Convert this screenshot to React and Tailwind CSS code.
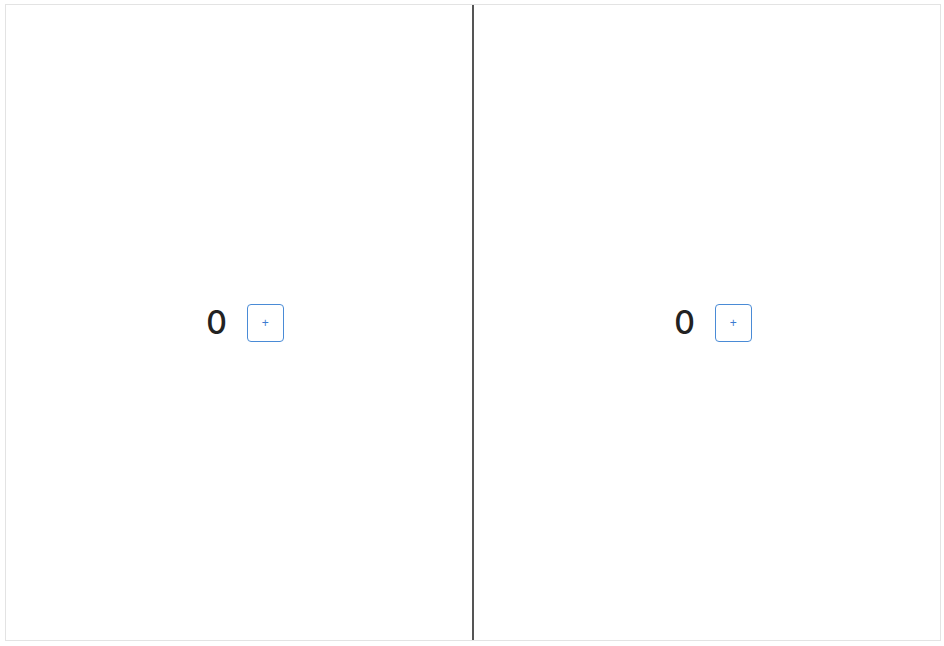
export default function App() {
  return (
    <div className="w-[944px] h-[646px] bg-white pl-[5px] pt-[4px]">
      <div className="flex w-[936px] h-[637px] border border-[#e3e3e3]">
        <Pane />
        <div className="w-[2px] bg-[#555555]" />
        <Pane />
      </div>
    </div>
  );
}

function Pane() {
  return (
    <div className="flex-1 flex items-center justify-center pl-[12px]">
      <div className="flex items-center gap-[20px]">
        <span className="text-[32px] leading-none font-medium text-[#222222] font-['Inter',sans-serif]">0</span>
        <button className="w-[37px] h-[38px] rounded-[4px] border border-[#4a8bd6] text-[#3b7bd0] text-[12px] flex items-center justify-center font-['Liberation_Sans',sans-serif]">
          +
        </button>
      </div>
    </div>
  );
}
